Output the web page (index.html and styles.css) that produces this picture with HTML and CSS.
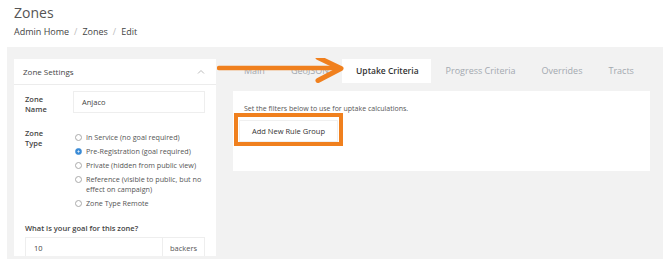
FILE: index.html
```html
<!DOCTYPE html>
<html lang="en">
<head>
    <meta charset="UTF-8">
    <meta name="viewport" content="width=device-width, initial-scale=1.0">
    <title>Zones - Edit</title>
    <link rel="stylesheet" href="styles.css">
</head>
<body>

    <div class="page-header">
        <h1>Zones</h1>
        <div class="breadcrumb">
            <span>Admin Home</span><span class="sep">/</span><span>Zones</span><span class="sep">/</span><span>Edit</span>
        </div>
    </div>

    <div class="content">
        <!-- left side: zone settings form -->
        <div class="panel">
            <div class="panel-heading">
                <span>Zone Settings</span>
                <svg class="chevron" width="8" height="5" viewBox="0 0 8 5"><path d="M1 4.5 L4 1.5 L7 4.5" fill="none" stroke="#bbb" stroke-width="1"/></svg>
            </div>
            <div class="panel-body">
                <div class="form-row">
                    <label class="form-label">Zone<br>Name</label>
                    <div class="form-field">
                        <div class="text-input">Anjaco</div>
                    </div>
                </div>
                <div class="form-row type-row">
                    <label class="form-label">Zone<br>Type</label>
                    <div class="form-field radios">
                        <div class="radio"><span class="dot"></span><span>In Service (no goal required)</span></div>
                        <div class="radio"><span class="dot checked"></span><span>Pre-Registration (goal required)</span></div>
                        <div class="radio"><span class="dot"></span><span>Private (hidden from public view)</span></div>
                        <div class="radio"><span class="dot"></span><span>Reference (visible to public, but no effect on campaign)</span></div>
                        <div class="radio"><span class="dot"></span><span>Zone Type Remote</span></div>
                    </div>
                </div>
                <div class="goal-label">What is your goal for this zone?</div>
                <div class="input-group">
                    <div class="group-value">10</div>
                    <div class="group-addon">backers</div>
                </div>
            </div>
        </div>

        <!-- right side: tabs -->
        <div class="tabs-area">
            <div class="tabs">
                <div class="tab">Main</div>
                <div class="tab">GeoJSON</div>
                <div class="tab active">Uptake Criteria</div>
                <div class="tab">Progress Criteria</div>
                <div class="tab">Overrides</div>
                <div class="tab">Tracts</div>
            </div>
            <div class="tab-content">
                <p class="hint">Set the filters below to use for uptake calculations.</p>
                <div class="highlight">
                    <button class="btn">Add New Rule Group</button>
                </div>
            </div>
        </div>

        <!-- annotation arrow drawn over the tabs -->
        <svg class="arrow" width="136" height="30" viewBox="0 0 136 30">
            <path d="M2 10 L122 10" stroke="#f0801e" stroke-width="4.5" stroke-linecap="round"/>
            <path d="M101 -0.5 L124 10.5 L101 22.5" fill="none" stroke="#f0801e" stroke-width="5" stroke-linecap="round" stroke-linejoin="round"/>
        </svg>
    </div>

</body>
</html>
```

FILE: styles.css
```css
body {
    margin: 0;
    font-family: "Open Sans", Arial, sans-serif;
    background-color: #fff;
    color: #444;
}

.page-header {
    padding: 3px 14px 0 14px;
    height: 44px;
}

.page-header h1 {
    margin: 0;
    font-size: 14px;
    font-weight: 400;
    color: #555;
    line-height: 20px;
}

.breadcrumb {
    font-size: 9px;
    color: #444;
    margin-top: 2px;
}

.breadcrumb .sep {
    color: #bbb;
    margin: 0 5px;
}

.content {
    position: relative;
    display: flex;
    gap: 17px;
    margin-left: 7px;
    height: 200px;
    padding: 12px 13px 0 7px;
    background-color: #f2f2f2;
}

.panel {
    width: 202px;
    flex-shrink: 0;
    background-color: #fff;
    height: 197px;
    overflow: hidden;
}

.panel-heading {
    display: flex;
    justify-content: space-between;
    align-items: center;
    height: 25px;
    padding: 0 11px 0 9px;
    font-size: 8px;
    color: #444;
    border-bottom: 1px solid #ececec;
}

.panel-body {
    padding: 6px 11px 0 11px;
}

.form-row {
    display: flex;
}

.form-label {
    width: 48px;
    flex-shrink: 0;
    font-size: 7.5px;
    font-weight: 600;
    line-height: 10px;
    color: #444;
    padding-top: 3px;
}

.form-field {
    flex: 1;
}

.text-input {
    height: 20px;
    border: 1px solid #eee;
    font-size: 7.5px;
    color: #444;
    line-height: 20px;
    padding-left: 8px;
}

.type-row {
    margin-top: 14px;
}

.type-row .form-label {
    padding-top: 1px;
    line-height: 9.5px;
}

.radios {
    padding-top: 4px;
    padding-left: 2px;
}

.radio {
    display: flex;
    align-items: flex-start;
    font-size: 7.2px;
    line-height: 10px;
    color: #555;
    margin-bottom: 4px;
}

.dot {
    width: 5px;
    height: 5px;
    border: 1px solid #aaa;
    border-radius: 50%;
    margin: 1.5px 4px 0 0;
    flex-shrink: 0;
}

.dot.checked {
    border-color: #3a8bd6;
    background: radial-gradient(circle, #dbe9f7 0, #dbe9f7 0.8px, #3a8bd6 1.3px);
}

.goal-label {
    font-size: 7.5px;
    font-weight: 600;
    line-height: 10px;
    color: #444;
    margin-top: 11px;
}

.input-group {
    display: flex;
    height: 20px;
    margin-top: 4px;
    border: 1px solid #eee;
    font-size: 7.5px;
    line-height: 20px;
    color: #444;
}

.group-value {
    flex: 1;
    padding-left: 8px;
}

.group-addon {
    width: 41px;
    text-align: center;
    border-left: 1px solid #eee;
    color: #555;
}

.tabs-area {
    flex: 1;
}

.tabs {
    display: flex;
    height: 24px;
    align-items: stretch;
    white-space: nowrap;
}

.tab {
    font-size: 9px;
    color: #a3a9b0;
    padding: 0 13px;
    line-height: 24px;
}

.tab:first-child {
    padding-left: 11px;
}

.tab.active {
    background-color: #fff;
    color: #333;
    font-size: 8.5px;
    font-weight: 600;
    padding: 0 12px 0 14px;
}

.tab.active + .tab {
    padding-left: 15px;
}

.tab-content {
    margin-top: 8px;
    background-color: #fff;
    height: 67px;
    padding: 13px 0 0 1px;
}

.hint {
    margin: 0 0 0 10px;
    font-size: 7px;
    color: #555;
}

.highlight {
    display: inline-block;
    border: 4px solid #f0801e;
}

.btn {
    font-family: "Open Sans", Arial, sans-serif;
    font-size: 7.5px;
    color: #333;
    background-color: #fff;
    border: 1px solid #f0f0f0;
    padding: 5px 12px 5px 12px;
    margin: 0 1px 0 1px;
}

.arrow {
    position: absolute;
    left: 210px;
    top: 11px;
}
```
